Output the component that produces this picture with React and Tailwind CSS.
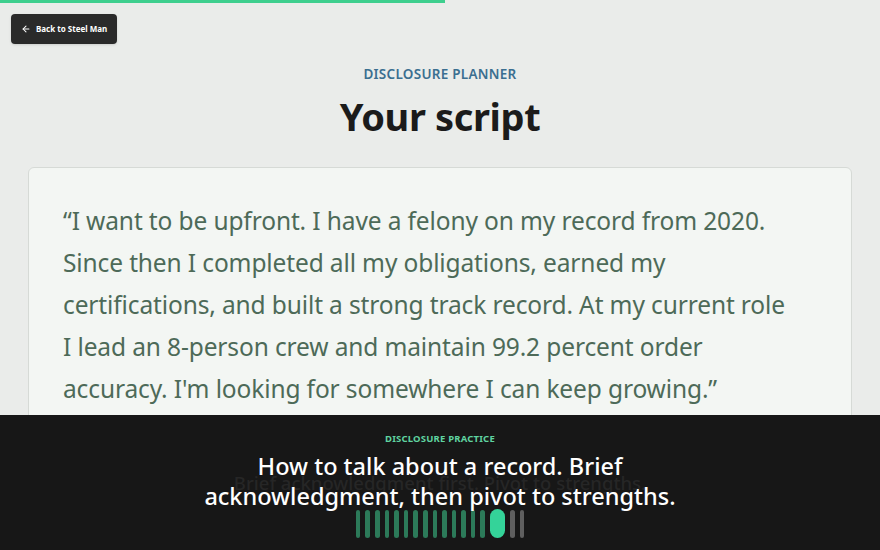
import { ArrowLeft } from 'lucide-react';

const scriptLines = [
  '“I want to be upfront. I have a felony on my record from 2020.',
  'Since then I completed all my obligations, earned my',
  'certifications, and built a strong track record. At my current role',
  'I lead an 8-person crew and maintain 99.2 percent order',
  "accuracy. I'm looking for somewhere I can keep growing.”",
];

const Waveform = () => {
  const done = Array.from({ length: 14 });
  return (
    <div className="flex items-center gap-[5px] h-[29px]">
      {done.map((_, i) => (
        <div key={i} className="w-[4.6px] h-[28px] rounded-full bg-[#2c7a59]" />
      ))}
      <div className="w-[15px] h-[29px] rounded-full bg-[#34d399]" />
      <div className="w-[4.6px] h-[28px] rounded-full bg-[#5f5f5f]" />
      <div className="w-[4.6px] h-[28px] rounded-full bg-[#5f5f5f]" />
    </div>
  );
};

export default function App() {
  return (
    <div
      className="relative w-full h-[550px] overflow-hidden bg-[#eaecea]"
      style={{ fontFamily: '"Noto Sans", "Open Sans", sans-serif' }}
    >
      {/* progress */}
      <div className="h-[3px] w-[445px] bg-[#3ecf8e]" />

      <div className="px-[11px] pt-[11px]">
        <button className="flex items-center gap-[5px] h-[30px] px-[10px] rounded-[4px] bg-[#2a2a2a] text-white text-[8px] font-bold shadow-sm whitespace-nowrap">
          <ArrowLeft className="w-[10px] h-[10px]" strokeWidth={2.5} />
          <span>Back to Steel Man</span>
        </button>
      </div>

      {/* Heading */}
      <div className="flex flex-col items-center mt-[21px]">
        <p className="text-[13.5px] font-semibold tracking-[0.02em] text-[#3b6f90] leading-[18px]">
          DISCLOSURE PLANNER
        </p>
        <h1 className="mt-[9px] text-[38px] font-bold text-[#1b1b1b] leading-[48px] tracking-[-0.01em]">
          Your script
        </h1>
      </div>

      {/* Card */}
      <div className="mx-[28px] mt-[27px] rounded-[6px] border border-[#d6dad6] bg-[#f3f6f3] pl-[34px] pr-[20px] pt-[32px] pb-[40px]">
        <div className="text-[24.5px] leading-[42px] text-[#4d6a58] tracking-[-0.005em]">
          {scriptLines.map((l) => (
            <div key={l} className="whitespace-nowrap">{l}</div>
          ))}
        </div>
      </div>

      {/* Practice overlay */}
      <div className="absolute left-0 right-0 bottom-0 h-[135px] bg-[#171717] flex flex-col items-center pt-[18px]">
        <p className="text-[9.5px] font-bold tracking-[0.02em] text-[#5fd3a0] leading-[12px]">
          DISCLOSURE PRACTICE
        </p>
        <div className="relative mt-[6px] text-center">
          <p className="absolute left-0 right-0 top-[17px] text-[18.5px] font-medium text-[#262626] leading-[30px] whitespace-nowrap">
            Brief acknowledgment first. Pivot to strengths.
          </p>
          <p className="relative text-[23.5px] font-medium text-white leading-[30px]">
            How to talk about a record. Brief
            <br />
            acknowledgment, then pivot to strengths.
          </p>
        </div>
        <div className="-mt-[2px]">
          <Waveform />
        </div>
      </div>
    </div>
  );
}
